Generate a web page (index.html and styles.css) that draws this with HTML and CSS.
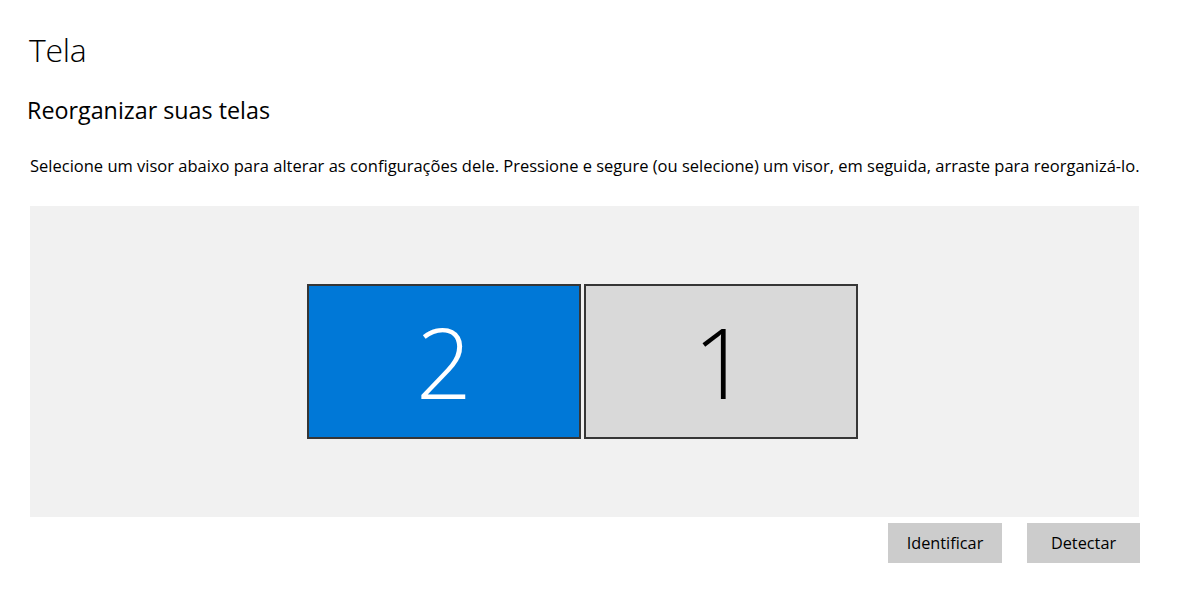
FILE: index.html
```html
<!DOCTYPE html>
<html lang="pt-BR">
<head>
<meta charset="utf-8">
<title>Tela</title>
<link rel="stylesheet" href="styles.css">
</head>
<body>
<main class="page">
  <h1 class="title">Tela</h1>
  <h2 class="subtitle">Reorganizar suas telas</h2>
  <p class="desc">Selecione um visor abaixo para alterar as configurações dele. Pressione e segure (ou selecione) um visor, em seguida, arraste para reorganizá-lo.</p>
  <div class="canvas">
    <div class="monitor monitor-selected">2</div>
    <div class="monitor">1</div>
  </div>
  <div class="actions">
    <button class="btn">Identificar</button>
    <button class="btn">Detectar</button>
  </div>
</main>
</body>
</html>
```
FILE: styles.css
```css
html, body {
  margin: 0;
  padding: 0;
  background: #ffffff;
}
body {
  font-family: "Open Sans", "Noto Sans", sans-serif;
  color: #000000;
}
.page {
  width: 1110px;
  padding: 0 0 0 30px;
}
.title {
  margin: 26px 0 0 -1px;
  font-size: 32px;
  font-weight: 300;
  line-height: 48px;
  letter-spacing: -0.3px;
}
.subtitle {
  margin: 21px 0 0 -3px;
  font-size: 23.3px;
  font-weight: 400;
  line-height: 30px;
}
.desc {
  margin: 30px 0 0 0;
  font-size: 16.5px;
  line-height: 22px;
  white-space: nowrap;
}
.canvas {
  margin-top: 29px;
  height: 311px;
  width: 1109px;
  background: #f1f1f1;
  display: flex;
  justify-content: center;
  align-items: center;
  gap: 3px;
  padding-right: 4px;
  box-sizing: border-box;
}
.monitor {
  width: 274px;
  height: 155px;
  box-sizing: border-box;
  border: 2px solid #363636;
  background: #d9d9d9;
  display: flex;
  align-items: center;
  justify-content: center;
  font-size: 98px;
  font-weight: 300;
  color: #000;
  line-height: 1;
  padding-bottom: 2px;
}
.monitor-selected {
  background: #0078d7;
  color: #ffffff;
}
.actions {
  display: flex;
  justify-content: flex-end;
  gap: 25px;
  margin-top: 6px;
  width: 1110px;
}
.btn {
  height: 40px;
  border: none;
  background: #cccccc;
  font-family: inherit;
  font-size: 16.3px;
  color: #000;
  padding: 0;
  width: 114px;
}
.btn + .btn {
  width: 113px;
}
```
